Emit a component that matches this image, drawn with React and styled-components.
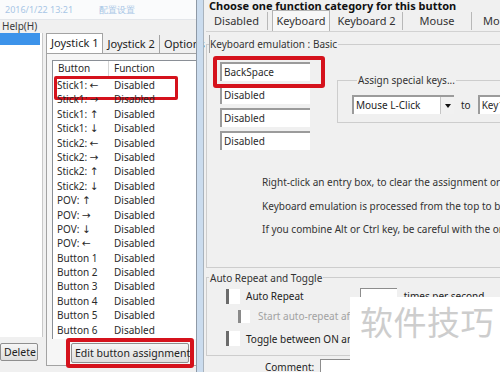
import styled, { createGlobalStyle } from "styled-components";

const GlobalStyle = createGlobalStyle`
  html, body { margin: 0; padding: 0; }
  body {
    font-family: "Noto Sans", "Open Sans", sans-serif;
    font-size: 10px;
    color: #1e1e1e;
    background: #f0f0f0;
  }
  * { box-sizing: border-box; }
`;

const Screen = styled.div`
  width: 500px;
  height: 372px;
  overflow: hidden;
  display: flex;
  position: relative;
  background: #f0f0f0;
`;

/* ---------- left window ---------- */

const LeftWindow = styled.div`
  width: 196px;
  flex-shrink: 0;
  display: flex;
  flex-direction: column;
  background: #f0f0f0;
`;

const TitleStrip = styled.div`
  height: 20px;
  display: flex;
  align-items: center;
  gap: 26px;
  padding-left: 5px;
  background: #fafbfc;
  color: #a8c6e6;
  font-size: 9px;
  border-bottom: 1px solid #e3e6ea;
`;

const MenuBar = styled.div`
  height: 12px;
  line-height: 12px;
  padding-left: 2px;
  color: #3a3a3a;
`;

const LeftBody = styled.div`
  flex: 1;
  display: flex;
  padding-top: 1px;
`;

const SideColumn = styled.div`
  width: 43px;
  display: flex;
  flex-direction: column;
`;

const SideList = styled.div`
  height: 304px;
  background: #fff;
  border-right: 1px solid #c9c9c9;
`;

const SelectedItem = styled.div`
  height: 12px;
  width: 40px;
  background: #3c93ea;
`;

const PushButton = styled.div`
  height: 20px;
  line-height: 18px;
  padding: 0 3px;
  border: 1px solid #8f8f8f;
  border-radius: 2px;
  background: linear-gradient(#f6f6f6, #dedede);
  white-space: nowrap;
  font-size: 10.5px;
  color: #222;
`;

const DeleteButton = styled(PushButton)`
  width: 38px;
  margin-top: 6px;
  height: 18px;
  line-height: 16px;
`;

const TabArea = styled.div`
  flex: 1;
  display: flex;
  flex-direction: column;
  padding-left: 3px;
  min-width: 0;
`;

const TabStrip = styled.div`
  height: 20px;
  display: flex;
  align-items: flex-end;
  white-space: nowrap;
`;

const Tab = styled.div`
  height: ${(p) => (p.active ? "20px" : "18px")};
  line-height: 18px;
  padding: 0 4px;
  font-size: 11px;
  color: #222;
  ${(p) =>
    p.active
      ? "background:#fff;border:1px solid #a3a3a3;border-bottom:none;"
      : "border-right:1px solid #a3a3a3;"}
`;

const TabPage = styled.div`
  flex: 1;
  display: flex;
  flex-direction: column;
  padding: 6px 0 0 5px;
  background: #f6f6f6;
  border-left: 1px solid #a3a3a3;
  border-top: 1px solid #a3a3a3;
  margin-bottom: 6px;
  border-bottom: 1px solid #a3a3a3;
`;

const ListBox = styled.div`
  height: 279px;
  background: #fff;
  border-left: 1px solid #8a8f96;
  border-top: 1px solid #8a8f96;
  display: flex;
  flex-direction: column;
`;

const ListHeader = styled.div`
  height: 16px;
  display: grid;
  grid-template-columns: 56px 1fr;
  line-height: 15px;
  margin-bottom: 1px;
  color: #2a2a2a;
  & > span { padding-left: 5px; }
  & > span:first-child { border-right: 1px solid #d5d5d5; }
`;

const ListRow = styled.div`
  position: relative;
  height: 14.4px;
  line-height: 14.4px;
  display: grid;
  grid-template-columns: 57px 1fr;
  padding-left: 4px;
  color: #2a2a2a;
  ${(p) =>
    p.marked &&
    `&::after {
      content: "";
      position: absolute;
      left: 1px;
      top: -2px;
      width: 118px;
      height: 18px;
      border: 3px solid #d5121c;
      border-radius: 2px;
    }`}
`;

const Arrow = styled.span`
  font-family: "DejaVu Sans", sans-serif;
  font-size: 10.5px;
`;

const ButtonRow = styled.div`
  display: flex;
  justify-content: flex-end;
  padding: 4px 7px 0 0;
`;

const Marked = styled.div`
  position: relative;
  &::after {
    content: "";
    position: absolute;
    left: ${(p) => p.l}px;
    top: ${(p) => p.t}px;
    right: ${(p) => p.r}px;
    bottom: ${(p) => p.b}px;
    border: 4px solid #d5121c;
    border-radius: 3px;
  }
`;

const EditButton = styled(PushButton)`
  width: 118px;
  text-align: center;
`;

/* ---------- frame between windows ---------- */

const Frame = styled.div`
  width: 8px;
  flex-shrink: 0;
  background: #cbdcee;
  border-left: 1px solid #8e99a6;
  border-right: 1px solid #a9b3bd;
`;

/* ---------- right window ---------- */

const RightWindow = styled.div`
  flex: 1;
  display: flex;
  flex-direction: column;
  padding-left: 2px;
  min-width: 0;
  white-space: nowrap;
`;

const Title = styled.div`
  height: 13px;
  line-height: 11px;
  padding-left: 3px;
  font-weight: bold;
  font-size: 11px;
  color: #111;
`;

const CategoryBar = styled.div`
  height: 21px;
  display: flex;
  align-items: center;
  border-bottom: 1px solid #d2d2d2;
  font-size: 11px;
`;

const CategoryTab = styled.div`
  width: ${(p) => p.w}px;
  flex-shrink: 0;
  text-align: ${(p) => (p.left ? "left" : "center")};
  padding-left: ${(p) => (p.left ? 11 : 0)}px;
  line-height: 18px;
  height: ${(p) => (p.active ? 21 : 18)}px;
  margin-left: ${(p) => p.ml || 0}px;
  color: #333;
  ${(p) =>
    p.active
      ? "border:1px solid #b3b3b3;border-bottom:none;background:#f7f7f7;line-height:20px;align-self:flex-end;"
      : p.sep
      ? "border-right:1px solid #b8b8b8;"
      : ""}
`;

const Group = styled.fieldset`
  margin: ${(p) => p.m || "0"};
  padding: ${(p) => p.pad || "0"};
  border: 1px solid #cdcdcd;
  border-right: none;
  min-width: 0;
`;

const Legend = styled.legend`
  padding: 0 1px;
  margin-left: ${(p) => p.ml || 2}px;
  line-height: 14px;
  color: #333;
`;

const TopRow = styled.div`
  display: flex;
  align-items: flex-start;
`;

const EntryColumn = styled.div`
  display: flex;
  flex-direction: column;
  gap: 4px;
  margin: 11px 0 0 13px;
`;

const Entry = styled.div`
  width: ${(p) => p.w || 90}px;
  height: 19px;
  line-height: 17px;
  padding-left: 2px;
  background: #fff;
  border-top: 2px solid #9b9b9b;
  border-left: 2px solid #9b9b9b;
  color: #2b2b2b;
`;

const AssignGroup = styled(Group)`
  margin: 22px 0 0 27px;
  padding: 8px 0 8px 14px;
  flex: 1;
  display: flex;
`;

const AssignLine = styled.div`
  display: flex;
  align-items: center;
  gap: 7px;
`;

const Select = styled.div`
  width: 102px;
  height: 19px;
  display: flex;
  background: #fff;
  border-top: 2px solid #9b9b9b;
  border-left: 2px solid #9b9b9b;
  line-height: 17px;
  & > span:first-child { flex: 1; padding-left: 2px; }
`;

const DropArrow = styled.span`
  width: 14px;
  border-left: 1px solid #c5c5c5;
  background: #f1f1f1;
  display: flex;
  align-items: center;
  justify-content: center;
  &::before {
    content: "";
    border-left: 3px solid transparent;
    border-right: 3px solid transparent;
    border-top: 4px solid #111;
  }
`;

const Notes = styled.div`
  margin-top: 21px;
  padding-left: 55px;
  & > div { line-height: 23.5px; color: #333; }
`;

const CheckRow = styled.div`
  display: flex;
  align-items: center;
  height: ${(p) => p.h}px;
  padding-left: ${(p) => p.indent}px;
  gap: ${(p) => p.gap}px;
  color: ${(p) => (p.disabled ? "#a2a2a2" : "#222")};
`;

const CheckBox = styled.span`
  width: ${(p) => (p.small ? 12 : 14)}px;
  height: ${(p) => (p.small ? 13 : 15)}px;
  background: #fff;
  border-left: 3px solid ${(p) => (p.small ? "#8a8a8a" : "#6b6b6b")};
  flex-shrink: 0;
`;

const TimesBox = styled.span`
  width: 37px;
  height: 15px;
  margin-left: 50px;
  background: #fff;
  border-top: 1px solid #8d8d8d;
  border-left: 1px solid #8d8d8d;
  align-self: flex-start;
`;

const CommentRow = styled.div`
  display: flex;
  align-items: flex-start;
  gap: 6px;
  padding: 4px 0 0 59px;
  line-height: 14px;
`;

const CommentBox = styled.span`
  width: 200px;
  height: 16px;
  background: #fff;
  border-top: 1px solid #8d8d8d;
  border-left: 1px solid #8d8d8d;
  margin-top: -1px;
`;

const Watermark = styled.div`
  position: absolute;
  right: 0;
  bottom: 0;
  width: 150px;
  height: 75px;
  background: #fff;
  padding: 3px 0 0 10px;
  font-family: "Noto Sans CJK SC", sans-serif;
  font-size: 33px;
  line-height: 42px;
  color: #cdcdcd;
  letter-spacing: 0.5px;
`;

const rows = [
  ["Stick1: ", "←"], ["Stick1: ", "→"], ["Stick1: ", "↑"], ["Stick1: ", "↓"],
  ["Stick2: ", "←"], ["Stick2: ", "→"], ["Stick2: ", "↑"], ["Stick2: ", "↓"],
  ["POV: ", "↑"], ["POV: ", "→"], ["POV: ", "↓"], ["POV: ", "←"],
  ["Button 1"], ["Button 2"], ["Button 3"], ["Button 4"], ["Button 5"], ["Button 6"],
];

export default function App() {
  return (
    <>
      <GlobalStyle />
      <Screen>
        <LeftWindow>
          <TitleStrip>
            <span>2016/1/22 13:21</span>
            <span>配置设置</span>
          </TitleStrip>
          <MenuBar>Help(H)</MenuBar>
          <LeftBody>
            <SideColumn>
              <SideList>
                <SelectedItem />
              </SideList>
              <DeleteButton>Delete</DeleteButton>
            </SideColumn>
            <TabArea>
              <TabStrip>
                <Tab active>Joystick 1</Tab>
                <Tab>Joystick 2</Tab>
                <Tab>Options</Tab>
              </TabStrip>
              <TabPage>
                <ListBox>
                  <ListHeader>
                    <span>Button</span>
                    <span>Function</span>
                  </ListHeader>
                  {rows.map(([name, arrow], i) => (
                    <ListRow key={name + (arrow || "")} marked={i === 0}>
                      <span>
                        {name}
                        {arrow && <Arrow>{arrow}</Arrow>}
                      </span>
                      <span>Disabled</span>
                    </ListRow>
                  ))}
                </ListBox>
                <ButtonRow>
                  <Marked l={-5} t={-5} r={-5} b={-5}>
                    <EditButton>Edit button assignment</EditButton>
                  </Marked>
                </ButtonRow>
              </TabPage>
            </TabArea>
          </LeftBody>
        </LeftWindow>

        <Frame />

        <RightWindow>
          <Title>Choose one function category for this button</Title>
          <CategoryBar>
            <CategoryTab w={62} sep>Disabled</CategoryTab>
            <CategoryTab w={58} ml={4} active>Keyboard</CategoryTab>
            <CategoryTab w={72} ml={1} sep>Keyboard 2</CategoryTab>
            <CategoryTab w={69} sep>Mouse</CategoryTab>
            <CategoryTab w={60} left>Mouse 2</CategoryTab>
          </CategoryBar>

          <Group m="5px 0 0 0" pad="0 0 25px 0">
            <Legend>Keyboard emulation : Basic</Legend>
            <TopRow>
              <EntryColumn>
                <Marked l={-7} t={-6} r={-15} b={-7}>
                  <Entry>BackSpace</Entry>
                </Marked>
                <Entry>Disabled</Entry>
                <Entry>Disabled</Entry>
                <Entry>Disabled</Entry>
              </EntryColumn>
              <AssignGroup>
                <Legend ml={5}>Assign special keys...</Legend>
                <AssignLine>
                  <Select>
                    <span>Mouse L-Click</span>
                    <DropArrow />
                  </Select>
                  <span>to</span>
                  <Entry w={60}>Key1</Entry>
                </AssignLine>
              </AssignGroup>
            </TopRow>
            <Notes>
              <div>Right-click an entry box, to clear the assignment or set it.</div>
              <div>Keyboard emulation is processed from the top to bottom.</div>
              <div>If you combine Alt or Ctrl key, be careful with the order.</div>
            </Notes>
          </Group>

          <Group m="3px 0 0 0" pad="3px 0 5px 0">
            <Legend ml={0}>Auto Repeat and Toggle</Legend>
            <CheckRow h={17} indent={19} gap={6}>
              <CheckBox />
              <span>Auto Repeat</span>
              <TimesBox />
              <span style={{ marginLeft: 1 }}>times per second</span>
            </CheckRow>
            <CheckRow h={23} indent={31} gap={8} disabled>
              <CheckBox small />
              <span>Start auto-repeat after 0.5 sec</span>
            </CheckRow>
            <CheckRow h={22} indent={19} gap={6}>
              <CheckBox />
              <span>Toggle between ON and OFF</span>
            </CheckRow>
          </Group>

          <CommentRow>
            <span>Comment:</span>
            <CommentBox />
          </CommentRow>
        </RightWindow>

        <Watermark>软件技巧</Watermark>
      </Screen>
    </>
  );
}
